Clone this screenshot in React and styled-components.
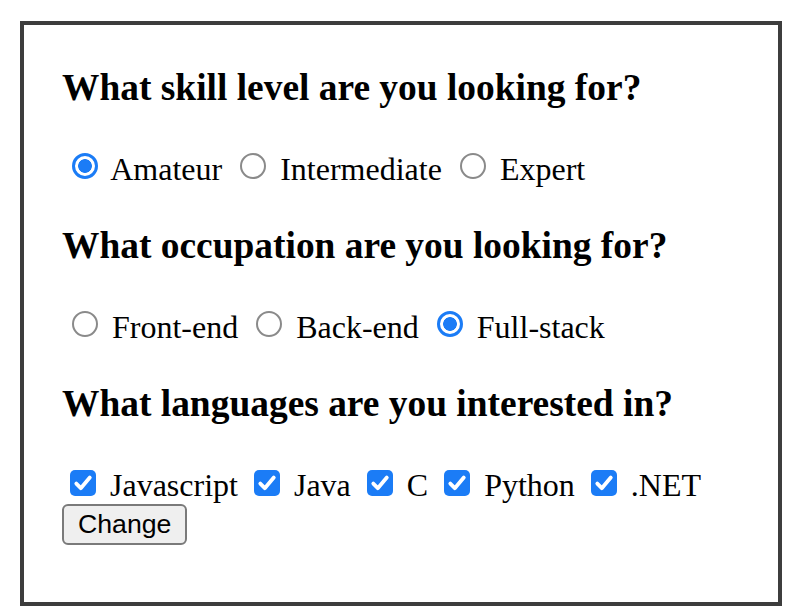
import { useState } from "react";
import styled, { createGlobalStyle } from "styled-components";

const GlobalStyle = createGlobalStyle`
  body {
    margin: 0;
    background: #fff;
    font-family: "Liberation Serif", "Times New Roman", serif;
    color: #000;
  }
`;

const Page = styled.div`
  padding: 21px 0 0 20px;
`;

const Box = styled.div`
  box-sizing: border-box;
  width: 762px;
  height: 585px;
  border: 4px solid #3d3d3d;
  padding: 5px 38px 0 38px;
`;

const Question = styled.h3`
  margin: 36px 0 42px;
  font-size: 37.44px;
  line-height: 43px;
  font-weight: bold;
`;

const Options = styled.div`
  font-size: 32px;
  line-height: 37px;
  white-space: nowrap;
`;

const Option = styled.label`
  cursor: pointer;
`;

const Radio = styled.span`
  display: inline-block;
  box-sizing: border-box;
  width: 26px;
  height: 26px;
  margin: 0 6px 1px 10px;
  border-radius: 50%;
  overflow: hidden;
  vertical-align: baseline;
  border: ${(p) => (p.$checked ? "3px solid #1b7cf6" : "2px solid #8a8a8a")};
  background: ${(p) =>
    p.$checked
      ? "radial-gradient(circle, #1b7cf6 0 6.5px, #fff 7.2px)"
      : "#fff"};
`;

const Checkbox = styled.span`
  display: inline-block;
  width: 26px;
  height: 26px;
  margin: 0 6px 0 8px;
  border-radius: 5px;
  overflow: hidden;
  vertical-align: baseline;
  background: ${(p) => (p.$checked ? "#1b7cf6" : "#fff")};
  box-shadow: ${(p) => (p.$checked ? "none" : "inset 0 0 0 2px #8a8a8a")};

  svg {
    display: block;
  }
`;

const ChangeButton = styled.button`
  display: block;
  margin: 0;
  padding: 3px 14px;
  font-family: "Liberation Sans", Arial, sans-serif;
  font-size: 26.67px;
  line-height: 31px;
  color: #000;
  background: #efefef;
  border: 2px solid #7a7a7a;
  border-radius: 6px;
`;

const CheckMark = () => (
  <svg width="26" height="26" viewBox="0 0 26 26">
    <path
      d="M6.3 13.6 L10.8 18.2 L19.8 7.6"
      fill="none"
      stroke="#fff"
      strokeWidth="3.8"
      strokeLinecap="round"
      strokeLinejoin="round"
    />
  </svg>
);

const levels = ["Amateur", "Intermediate", "Expert"];
const jobs = ["Front-end", "Back-end", "Full-stack"];
const languages = ["Javascript", "Java", "C", "Python", ".NET"];

const App = () => {
  const [level, setLevel] = useState("Amateur");
  const [job, setJob] = useState("Full-stack");
  const [langs, setLangs] = useState(languages);

  const toggleLang = (name) => {
    setLangs(
      langs.includes(name) ? langs.filter((l) => l !== name) : [...langs, name]
    );
  };

  return (
    <Page>
      <GlobalStyle />
      <Box>
        <Question>What skill level are you looking for?</Question>
        <Options>
          {levels.map((item) => (
            <Option key={item} onClick={() => setLevel(item)}>
              <Radio $checked={level === item} /> {item}{" "}
            </Option>
          ))}
        </Options>

        <Question>What occupation are you looking for?</Question>
        <Options>
          {jobs.map((item) => (
            <Option key={item} onClick={() => setJob(item)}>
              <Radio $checked={job === item} /> {item}{" "}
            </Option>
          ))}
        </Options>

        <Question>What languages are you interested in?</Question>
        <Options>
          {languages.map((item) => (
            <Option key={item} onClick={() => toggleLang(item)}>
              <Checkbox $checked={langs.includes(item)}>
                {langs.includes(item) && <CheckMark />}
              </Checkbox>{" "}
              {item}{" "}
            </Option>
          ))}
        </Options>
        <ChangeButton>Change</ChangeButton>
      </Box>
    </Page>
  );
};

export default App;
